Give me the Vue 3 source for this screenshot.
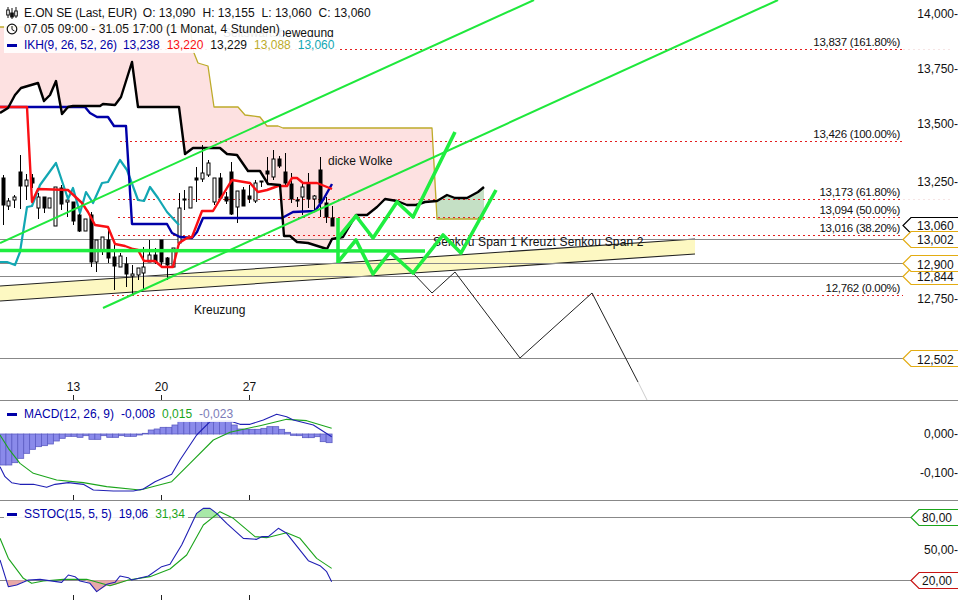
<script setup>
// chart data, all in page pixels (each pane svg uses a viewBox offset)
const pts = (list) => list.map((p) => p.join(',')).join(' ')
const zoomed = (list, top) => list.map(([x, y]) => [x / 3, top + y / 3])

const senkouA = [[0,27],[190,27],[194,53],[198,63],[208,66],[214,107],[238,107],[245,115],[260,117],[267,126],[278,126],[283,128],[432,128],[437,219],[484,219]]
const blackLine = [[0,113],[8,108],[15,95],[21,88],[38,83],[44,101],[50,95],[56,81],[62,114],[68,107],[73,106],[100,106],[103,104],[115,105],[121,97],[132,62],[138,107],[179,107],[185,154],[193,148],[220,148],[227,154],[237,155],[248,171],[260,171],[268,184],[280,185],[284,236],[290,236],[297,242],[308,243],[327,249],[332,239],[343,237],[356,215],[367,215],[377,207],[385,199],[397,201],[407,205],[416,205],[425,202],[437,201],[447,195],[455,198],[467,198],[478,192],[484,187]]
const blackToCloudEnd = blackLine.filter((p) => p[0] <= 437).reverse()
const pinkCloud = pts([...senkouA.filter((p) => p[0] <= 432), [437, 201], ...blackToCloudEnd])
const greenCloud = pts([[437,201],[447,195],[455,198],[467,198],[478,192],[484,187],[484,219],[437,219]])

const blueLine = [[0,107],[85,107],[90,113],[97,117],[108,117],[114,126],[126,126],[132,224],[167,224],[172,233],[180,237],[192,238],[197,232],[203,218],[282,218],[293,212],[315,211],[323,200],[332,184]]
const redLine = [[0,107],[27,107],[32,202],[38,189],[68,190],[82,203],[88,212],[95,225],[108,227],[115,244],[125,246],[133,249],[138,250],[144,261],[155,261],[162,267],[173,267],[179,243],[187,238],[192,237],[202,211],[213,211],[227,188],[232,180],[250,183],[258,192],[267,190],[278,186],[287,186],[292,178],[297,178],[303,183],[317,183],[332,189]]
const tealLine = [[0,262],[7,262],[15,265],[20,252],[27,207],[32,206],[40,185],[56,163],[68,199],[73,188],[80,213],[86,192],[93,203],[102,183],[108,182],[120,160],[127,170],[138,200],[144,201],[150,187],[158,198],[167,212],[179,225]]

// x, wick top, wick bottom, body top, body bottom, filled
const candles = [
  [3.5,175,225,178,205,1],[8.5,198,210,201,206,0],[14.5,195,208,197,200,0],[20.5,155,209,172,186,1],
  [26.5,174,200,180,186,0],[32.5,174,188,178,183,1],[38.5,193,219,197,208,0],[44.5,197,213,197,208,1],
  [49.5,198,208,198,208,0],[55.5,187,226,187,226,0],[61.5,185,210,188,204,1],[67.5,195,217,200,202,0],
  [73.5,202,225,202,221,1],[79.5,213,232,215,231,1],[85.5,219,231,219,231,0],[91.5,212,267,215,262,1],
  [96.5,240,272,240,262,0],[102.5,237,255,237,250,0],[108.5,227,263,240,258,1],[114.5,245,290,257,266,1],
  [120.5,253,267,256,267,0],[126.5,257,287,264,274,1],[132.5,265,295,274,276,0],[138.5,268,280,268,275,0],
  [143.5,247,290,267,273,0],[149.5,240,262,255,262,0],[155.5,248,264,255,262,1],[161.5,240,268,240,262,1],
  [167.5,257,280,258,265,1],[173.5,248,267,248,267,0],[179.5,193,245,208,243,0],[184.5,190,210,199,200,0],
  [190.5,187,208,187,208,0],[196.5,167,202,178,180,1],[202.5,145,182,173,179,0],[208.5,160,177,163,175,0],
  [214.5,178,205,178,202,0],[220.5,173,198,178,198,1],[226.5,192,204,197,201,1],[231.5,162,215,172,214,1],
  [237.5,191,223,191,207,0],[243.5,187,206,190,206,1],[249.5,185,203,196,199,1],[255.5,180,203,183,201,0],
  [261.5,181,187,181,182,1],[267.5,157,183,171,174,1],[273.5,150,180,159,177,0],[279.5,156,168,159,166,1],
  [285.5,153,185,172,183,1],[291.5,173,203,184,199,1],[297.5,197,207,200,201,1],[302.5,183,215,187,197,0],
  [308.5,173,208,183,199,1],[314.5,195,212,196,199,0],[320.5,157,217,170,203,1],[326.5,197,223,203,217,1],
  [332.5,206,226,218,226,1]
]

const fibLines = [
  { y: 49.5, x: 120, label: '13,837 (161.80%)', ly: 46, faint: true },
  { y: 141.5, x: 120, label: '13,426 (100.00%)', ly: 138 },
  { y: 199.5, x: 118, label: '13,173 (61.80%)', ly: 196, faint: true },
  { y: 217.5, x: 118, label: '13,094 (50.00%)', ly: 214 },
  { y: 235.5, x: 118, label: '13,016 (38.20%)', ly: 232 },
  { y: 295.5, x: 112, label: '12,762 (0.00%)', ly: 292 }
]
const grayLines = [239.5, 263.5, 276.5, 358.5]

const axisLabels = [
  { text: '14,000-', y: 18 }, { text: '13,750-', y: 73 }, { text: '13,500-', y: 128 },
  { text: '13,250-', y: 186 }, { text: '12,750-', y: 303 }
]

// tag = arrow-shaped price box, open on the right side
const tagPath = (tipX, y) => `M958 ${y - 8}H${tipX + 8}L${tipX} ${y}L${tipX + 8} ${y + 8}H958`
const priceTags = [
  { text: '13,060', y: 225.5, color: '#000', ty: 230 },
  { text: '12,844', y: 276.5, color: '#e3ac12', ty: 281 },
  { text: '12,502', y: 358.5, color: '#e3ac12', ty: 364 },
  { text: '13,002', y: 239.5, color: '#e3ac12', ty: 244 },
  { text: '12,900', y: 263.5, color: '#e3ac12', ty: 269 }
]
const days = [{ x: 73.5, text: '13' }, { x: 161.5, text: '20' }, { x: 249.5, text: '27' }]

const zigzagUpper = [[338,238],[356,216],[373,238],[397,202],[413,217],[455,132]]
const zigzagLower = [[338,262],[356,240],[373,274],[390,252],[413,273],[443,235],[461,253],[496,190]]
const forecast = [[413,273],[432,293],[455,272],[520,358],[592,293],[638,382]]

// MACD histogram: bar end heights read off the chart
const histoEnds = [210,210,203,190,175,163,155,152,147,138,130,124,124,127,122,133,133,122,127,127,122,124,124,120,115,105,102,97,97,90,78,78,78,78,78,78,78,78,78,90,102,103,103,103,100,95,95,103,112,121,122,128,128,125,140,143]
const histoBars = histoEnds.map((end, i) => {
  const v = (end - 117) / 3
  return { x: i * 5.93, y: v > 0 ? 434 : 434 + v, h: Math.abs(v) }
})
const macdLine = zoomed([[0,215],[15,245],[35,263],[60,268],[100,268],[140,277],[165,268],[205,263],[250,268],[280,285],[340,288],[400,288],[430,282],[465,260],[515,238],[540,195],[590,120],[630,80],[690,78],[720,88],[750,88],[790,75],[830,58],[860,65],[880,75],[940,90],[995,125]], 395)
const signalLine = zoomed([[0,120],[25,160],[60,205],[100,235],[170,255],[250,263],[320,275],[420,285],[515,260],[570,205],[640,135],[690,112],[780,92],[860,73],[920,77],[995,100]], 395)

const stochBlue = zoomed([[0,195],[25,275],[50,270],[85,255],[120,253],[185,262],[205,240],[225,245],[240,258],[270,265],[290,290],[320,268],[345,262],[360,243],[385,248],[395,255],[445,243],[485,215],[510,208],[545,150],[590,55],[610,40],[630,40],[650,55],[680,85],[730,130],[770,133],[785,125],[805,125],[835,100],[860,115],[925,197],[960,212],[980,230],[995,260]], 495)
const stochGreen = zoomed([[0,130],[25,190],[70,250],[95,265],[130,258],[190,253],[260,253],[330,272],[385,255],[450,245],[510,222],[560,180],[610,90],[660,50],[700,70],[765,125],[800,128],[860,113],[900,130],[950,190],[995,220]], 495)
const stochRed1 = zoomed([[20,256],[25,275],[50,270],[78,256]], 495)
const stochRed2 = zoomed([[255,256],[270,265],[290,290],[320,272],[345,270],[385,256]], 495)
const stochTop = zoomed([[583,67],[590,55],[610,40],[630,40],[650,55],[657,67]], 495)
</script>

<template>
  <div class="chart">

    <!-- MAIN PANE -->
    <div class="pane main-pane">
      <svg class="pane-svg" width="958" height="400" viewBox="0 0 958 400">
        <polygon :points="pinkCloud" fill="#fde1e1" />
        <polygon :points="greenCloud" fill="#c5e0c5" />
        <polygon points="0,286 695,239 695,254 0,301" fill="#fdf8c2" />
        <line x1="0" y1="286" x2="695" y2="239" class="band-line" />
        <line x1="0" y1="301" x2="695" y2="254" class="band-line" />

        <line v-for="y in grayLines" :key="y" x1="0" :y1="y" x2="905" :y2="y" class="gray-line" />

        <g v-for="fib in fibLines" :key="fib.y">
          <line :x1="fib.x" :y1="fib.y" x2="903" :y2="fib.y" class="fib-line" />
          <line v-if="fib.faint" x1="903" :y1="fib.y" x2="950" :y2="fib.y" class="fib-faint" />
          <text x="900" :y="fib.ly" text-anchor="end" class="label fib-label">{{ fib.label }}</text>
        </g>

        <text x="223" y="37" class="label">Seitswärtsbewegung</text>
        <text x="328" y="165" class="label">dicke Wolke</text>
        <text x="194" y="314" class="label">Kreuzung</text>
        <text x="433" y="246" class="label senkou">Senkou Span 1 Kreuzt Senkou Span 2</text>

        <g v-for="c in candles" :key="c[0]">
          <line :x1="c[0]" :y1="c[1]" :x2="c[0]" :y2="c[2]" stroke="#000" />
          <rect :x="c[0] - 1.5" :y="c[3]" width="3" :height="c[4] - c[3]" :fill="c[5] ? '#000' : '#fff'" stroke="#000" />
        </g>

        <polyline :points="pts(senkouA)" class="line" stroke="#bdab2a" stroke-width="1.3" />
        <polyline :points="pts(tealLine)" class="line" stroke="#12a7b3" stroke-width="2.2" />
        <polyline :points="pts(blueLine)" class="line" stroke="#0000a8" stroke-width="2.4" />
        <polyline :points="pts(redLine)" class="line" stroke="#fa0f14" stroke-width="2.4" />
        <polyline :points="pts(blackLine)" class="line" stroke="#000" stroke-width="2.4" />
        <polyline :points="pts(forecast)" class="line" stroke="#222" stroke-width="1" />
        <line x1="638" y1="382" x2="647" y2="400" stroke="#ccc" />

        <line x1="0" y1="243" x2="534" y2="0" class="channel" />
        <line x1="103" y1="308" x2="778" y2="0" class="channel" />
        <line x1="0" y1="250.5" x2="425" y2="251" class="thick" />
        <line x1="338" y1="218" x2="338" y2="263" class="thick" />
        <polyline :points="pts(zigzagUpper)" class="line thick" />
        <polyline :points="pts(zigzagLower)" class="line thick" />

        <g v-for="d in days" :key="d.x">
          <text :x="d.x" y="391" text-anchor="middle" class="label">{{ d.text }}</text>
          <line :x1="d.x" y1="395" :x2="d.x" y2="400" stroke="#222" />
        </g>

        <text v-for="a in axisLabels" :key="a.text" x="958" :y="a.y" text-anchor="end" class="label">{{ a.text }}</text>

        <g v-for="tag in priceTags" :key="tag.text">
          <path :d="tagPath(903, tag.y)" fill="#fff" :stroke="tag.color" stroke-width="1.2" />
          <text x="917" :y="tag.ty" class="label">{{ tag.text }}</text>
        </g>
      </svg>

      <!-- LEGEND -->
      <div class="legend">
        <div class="legend-row">
          <svg class="legend-icon" width="12" height="12" viewBox="0 0 12 12">
            <path d="M2 0V11M6 1V12M10 0V11" stroke="#111" fill="none" />
            <rect x="0.7" y="3" width="2.6" height="5" fill="#fff" stroke="#111" />
            <rect x="4.7" y="6" width="2.6" height="4" fill="#111" stroke="#111" />
            <rect x="8.7" y="4" width="2.6" height="5" fill="#fff" stroke="#111" />
          </svg>
          <span class="title-text gap-title">E.ON SE (Last, EUR)</span>
          <span class="gap-item">O: 13,090</span>
          <span class="gap-item">H: 13,155</span>
          <span class="gap-item">L: 13,060</span>
          <span>C: 13,060</span>
        </div>
        <div class="legend-row">
          <svg class="legend-icon" width="12" height="12" viewBox="0 0 12 12">
            <circle cx="6" cy="6" r="4.8" fill="none" stroke="#111" stroke-width="1.2" />
            <path d="M6 3V6.5L8.5 8" fill="none" stroke="#111" />
          </svg>
          <span class="period">07.05 09:00 - 31.05 17:00 (1 Monat, 4 Stunden)</span>
        </div>
        <div class="legend-row blue">
          <span class="dash"></span>
          <span class="title-text gap-title">IKH(9, 26, 52, 26)</span>
          <span class="gap-value">13,238</span>
          <span class="gap-value red">13,220</span>
          <span class="gap-value black">13,229</span>
          <span class="gap-value gold">13,088</span>
          <span class="teal">13,060</span>
        </div>
      </div>
    </div>

    <!-- MACD -->
    <div class="pane">
      <svg class="pane-svg" width="958" height="100" viewBox="0 400 958 100">
        <line x1="0" y1="400.5" x2="958" y2="400.5" class="gray-line" />
        <rect v-for="(b, i) in histoBars" :key="i" :x="b.x" :y="b.y" width="5.93" :height="b.h" fill="#8a8aea" stroke="#5c5cc4" stroke-width="0.8" />
        <polyline :points="pts(signalLine)" class="line" stroke="#1ca51c" stroke-width="1.1" />
        <polyline :points="pts(macdLine)" class="line" stroke="#2020b4" stroke-width="1.1" />
        <text x="958" y="438" text-anchor="end" class="label">0,000-</text>
        <text x="958" y="477" text-anchor="end" class="label">-0,100-</text>
        <line v-for="d in days" :key="d.x" :x1="d.x" y1="495" :x2="d.x" y2="500" stroke="#222" />
      </svg>
      <div class="legend legend-sub">
        <div class="legend-row blue">
          <span class="dash"></span>
          <span class="gap-value">MACD(12, 26, 9)</span>
          <span class="gap-value">-0,008</span>
          <span class="gap-value green">0,015</span>
          <span class="faded">-0,023</span>
        </div>
      </div>
    </div>

    <!-- SSTOC -->
    <div class="pane">
      <svg class="pane-svg" width="958" height="100" viewBox="0 500 958 100">
        <line x1="0" y1="500.5" x2="958" y2="500.5" class="gray-line" />
        <line x1="0" y1="517.5" x2="912" y2="517.5" class="gray-line" />
        <line x1="0" y1="580.5" x2="912" y2="580.5" class="gray-line" />
        <polygon :points="pts(stochTop)" fill="#a8e8a8" />
        <polygon :points="pts(stochRed1)" fill="#e8a8a8" />
        <polygon :points="pts(stochRed2)" fill="#e8a8a8" />
        <polyline :points="pts(stochGreen)" class="line" stroke="#1ca51c" stroke-width="1.1" />
        <polyline :points="pts(stochBlue)" class="line" stroke="#2020b4" stroke-width="1.1" />
        <text x="958" y="554" text-anchor="end" class="label">50,00-</text>
        <path :d="tagPath(911, 517.5)" fill="#fff" stroke="#1ca51c" stroke-width="1.2" />
        <text x="922" y="522" class="label">80,00</text>
        <path :d="tagPath(911, 580.5)" fill="#fff" stroke="#c81414" stroke-width="1.2" />
        <text x="922" y="585" class="label">20,00</text>
        <line v-for="d in days" :key="d.x" :x1="d.x" y1="595" :x2="d.x" y2="600" stroke="#222" />
      </svg>
      <div class="legend legend-sub">
        <div class="legend-row blue stoch-row">
          <span class="dash"></span>
          <span class="gap-value">SSTOC(15, 5, 5)</span>
          <span class="gap-value">19,06</span>
          <span class="green">31,34</span>
        </div>
      </div>
    </div>

  </div>
</template>

<style scoped>
.chart {
  display: flex;
  flex-direction: column;
  width: 958px;
  height: 600px;
  overflow: hidden;
  background: #fff;
  font-family: "Liberation Sans", Arial, sans-serif;
  font-size: 12px;
  color: #111;
}

.pane {
  position: relative;
  height: 100px;
}

.main-pane {
  height: 400px;
}

.pane-svg {
  display: block;
}

.label {
  font-family: "Liberation Sans", Arial, sans-serif;
  font-size: 12px;
  fill: #111;
}

.fib-label {
  font-size: 11.5px;
  letter-spacing: -0.3px;
}

.senkou {
  letter-spacing: 0.15px;
}

.line {
  fill: none;
  stroke-linejoin: round;
}

.gray-line {
  stroke: #888;
  stroke-width: 1;
}

.fib-line {
  stroke: #e32020;
  stroke-width: 1;
  stroke-dasharray: 2 3;
}

.fib-faint {
  stroke: #f6e4e4;
  stroke-width: 1;
  stroke-dasharray: 2 3;
}

.band-line {
  stroke: #222;
  stroke-width: 1.1;
}

.channel {
  stroke: #1fe83c;
  stroke-width: 2;
}

.thick {
  stroke: #1fee40;
  stroke-width: 3.6;
}

.legend {
  position: absolute;
  top: 5px;
  left: 4px;
  display: flex;
  flex-direction: column;
  align-items: flex-start;
}

.legend-sub {
  top: 6px;
}

.legend-row {
  display: flex;
  align-items: center;
  height: 16px;
  padding-right: 3px;
  background: rgba(255, 255, 255, 0.9);
  white-space: nowrap;
}

.legend-icon {
  margin-right: 6px;
  margin-left: 2px;
}

.dash {
  width: 10px;
  height: 3px;
  margin: 0 7px 0 3px;
  background: #0000a8;
}

.title-text {
  letter-spacing: -0.1px;
}

.period {
  letter-spacing: 0.05px;
}

.stoch-row {
  letter-spacing: -0.1px;
}

.gap-title {
  margin-right: 6px;
}

.gap-item {
  margin-right: 7px;
}

.gap-value {
  margin-right: 7px;
}

.blue {
  color: #0000a8;
}

.red {
  color: #fa0f14;
}

.black {
  color: #111;
}

.gold {
  color: #bdab2a;
}

.teal {
  color: #12a7b3;
}

.green {
  color: #1ca51c;
}

.faded {
  color: #7c7cb8;
}
</style>
